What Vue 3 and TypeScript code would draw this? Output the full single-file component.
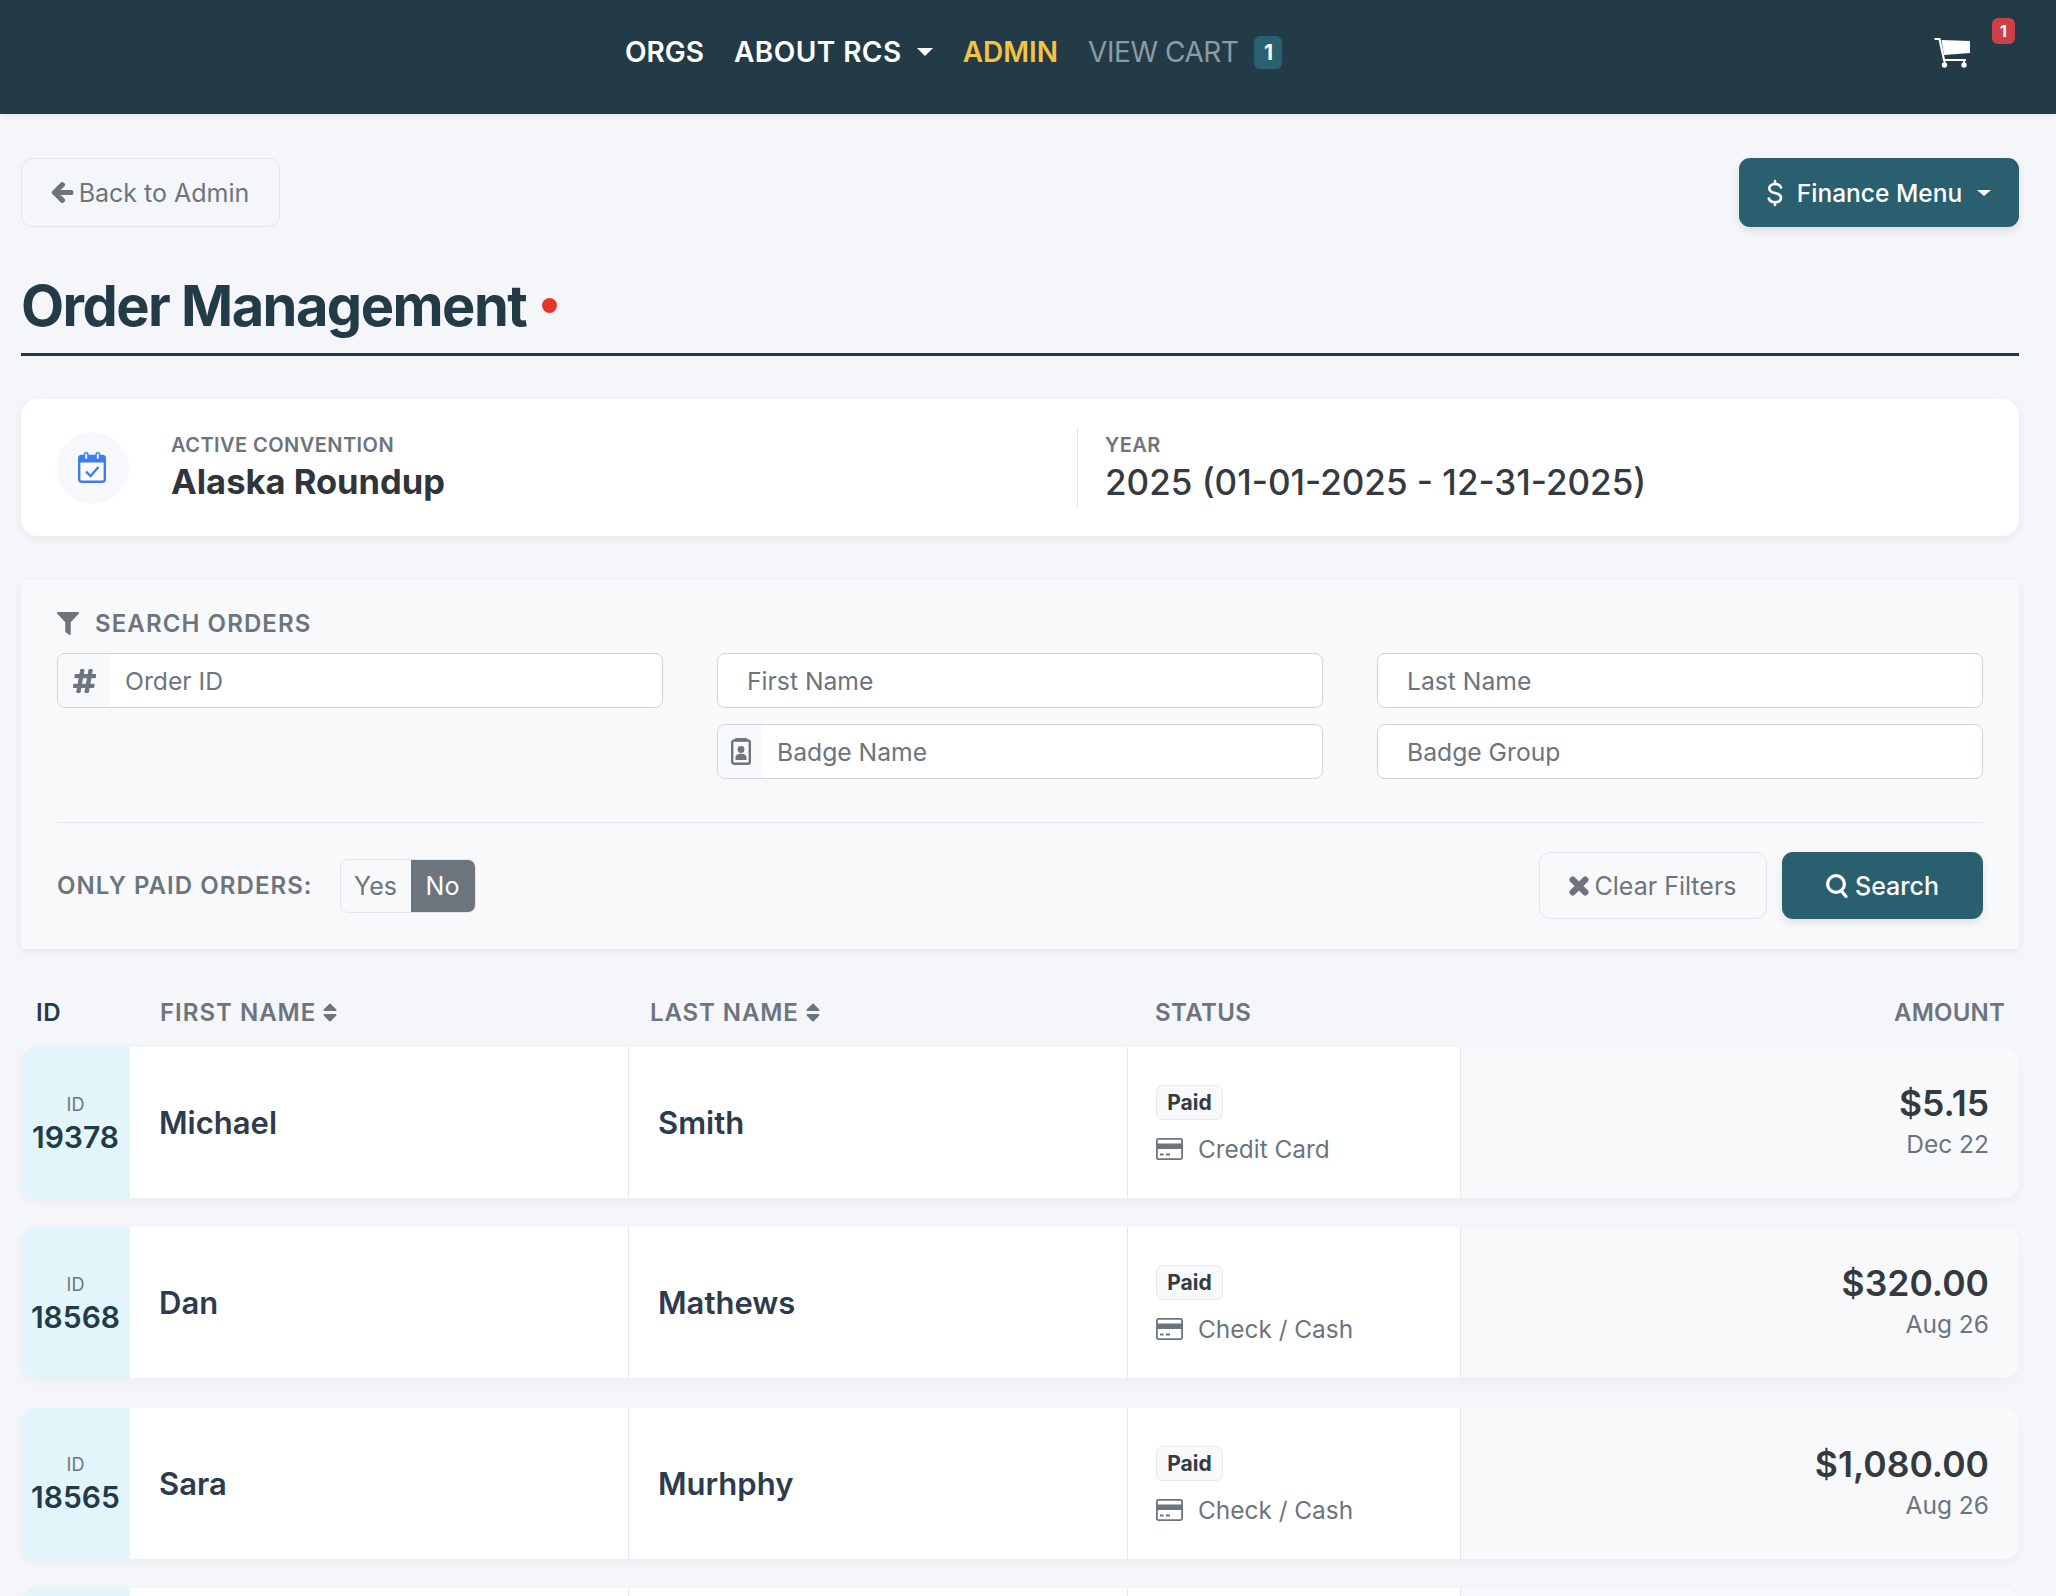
<script setup lang="ts">
interface Order {
  id: number
  first: string
  last: string
  method: string
  amount: string
  date: string
}

const orders: Order[] = [
  { id: 19378, first: 'Michael', last: 'Smith', method: 'Credit Card', amount: '$5.15', date: 'Dec 22' },
  { id: 18568, first: 'Dan', last: 'Mathews', method: 'Check / Cash', amount: '$320.00', date: 'Aug 26' },
  { id: 18565, first: 'Sara', last: 'Murhphy', method: 'Check / Cash', amount: '$1,080.00', date: 'Aug 26' }
]

const sortPath =
  'M41 288h238c21.4 0 32.1 25.9 17 41L177 448c-9.4 9.4-24.6 9.4-33.9 0L24 329c-15.1-15.1-4.4-41 17-41zm255-105L177 64c-9.4-9.4-24.6-9.4-33.9 0L24 183c-15.1 15.1-4.4 41 17 41h238c21.4 0 32.1-25.9 17-41z'
</script>

<template>
  <div class="page">
    <nav class="topbar">
      <div class="links">
        <a class="link">ORGS</a>
        <a class="link about">ABOUT RCS<span class="caret"></span></a>
        <a class="link admin">ADMIN</a>
        <a class="link muted">VIEW CART<span class="count">1</span></a>
      </div>
      <div class="cart">
        <svg class="cart-icon" viewBox="9 27 37 32" fill="#fff">
          <path d="M9.5 29H14.5L19 50H41" fill="none" stroke="#fff" stroke-width="2.2" />
          <path d="M16.5 30L45 31V43L19 45Z" />
          <path d="M19.5 50V55M39 50V55" stroke="#fff" stroke-width="1.8" />
          <circle cx="19.5" cy="55" r="2.7" />
          <circle cx="39" cy="55" r="2.7" />
        </svg>
        <span class="cart-badge">1</span>
      </div>
    </nav>

    <main class="content">
      <div class="toolbar">
        <button class="btn btn-light">
          <svg class="ico" viewBox="0 0 448 512" fill="currentColor" stroke="currentColor" stroke-width="36">
            <path d="M257.5 445.1l-22.2 22.2c-9.4 9.4-24.6 9.4-33.9 0L7 273c-9.4-9.4-9.4-24.6 0-33.9L201.4 44.7c9.4-9.4 24.6-9.4 33.9 0l22.2 22.2c9.5 9.5 9.3 25-.4 34.3L136.6 216H424c13.3 0 24 10.7 24 24v32c0 13.3-10.7 24-24 24H136.6l120.5 114.8c9.8 9.3 10 24.8.4 34.3z" />
          </svg>
          Back to Admin
        </button>
        <button class="btn btn-primary finance">
          <svg class="dollar" viewBox="0 0 16 28" fill="none" stroke="currentColor" stroke-width="2.6" stroke-linecap="round">
            <path d="M14 8.5C13 6 11 5 8 5C4.5 5 2.3 6.8 2.3 9.4C2.3 12.2 4.6 13.2 8 14C11.6 14.9 14 15.9 14 18.8C14 21.6 11.5 23.2 8 23.2C4.7 23.2 2.6 21.9 1.8 19.5" />
            <path d="M8 2V5M8 23.2V26" />
          </svg>
          Finance Menu<span class="caret"></span>
        </button>
      </div>

      <h1 class="title">Order Management<span class="dot"></span></h1>

      <section class="convention">
        <div class="convention-main">
          <div class="cal-circle">
            <svg class="cal" viewBox="0 0 28 31" fill="none">
              <rect x="1.2" y="4" width="25.6" height="25.8" rx="2.5" fill="#fff" stroke="#3b7df5" stroke-width="2.4" />
              <path d="M1.2 6.5A2.5 2.5 0 0 1 3.7 4H24.3A2.5 2.5 0 0 1 26.8 6.5V10.5H1.2Z" fill="#3b7df5" />
              <path d="M8 19.5L12.5 24L20.5 15" stroke="#3b7df5" stroke-width="2.4" />
              <rect x="6.5" y=".8" width="3.4" height="7" rx="1.7" fill="#fff" stroke="#3b7df5" stroke-width="1.5" />
              <rect x="18.1" y=".8" width="3.4" height="7" rx="1.7" fill="#fff" stroke="#3b7df5" stroke-width="1.5" />
            </svg>
          </div>
          <div class="convention-text">
            <div class="label">ACTIVE CONVENTION</div>
            <div class="convention-name">Alaska Roundup</div>
          </div>
        </div>
        <div class="convention-year">
          <div class="label">YEAR</div>
          <div class="year-value">2025 (01-01-2025 - 12-31-2025)</div>
        </div>
      </section>

      <section class="filters">
        <h2 class="filters-title">
          <svg class="funnel" viewBox="0 0 512 512" fill="currentColor" preserveAspectRatio="none">
            <path d="M487.976 0H24.028C2.71 0-8.047 25.866 7.058 40.971L192 225.941V432c0 7.831 3.821 15.17 10.237 19.662l80 55.98C298.02 518.69 320 507.493 320 487.98V225.941l184.947-184.97C520.021 25.896 509.338 0 487.976 0z" />
          </svg>
          SEARCH ORDERS
        </h2>
        <div class="fields">
          <div class="input-group">
            <span class="addon hash">
              <svg viewBox="0 0 448 512" fill="currentColor" stroke="currentColor" stroke-width="22">
                <path d="M440.667 182.109l7.143-40c1.313-7.355-4.342-14.109-11.813-14.109h-74.81l14.623-81.891C377.123 38.754 371.468 32 363.997 32h-40.632a12 12 0 0 0-11.813 9.891L296.175 128H197.54l14.623-81.891C213.477 38.754 207.822 32 200.35 32h-40.632a12 12 0 0 0-11.813 9.891L132.528 128H53.432a12 12 0 0 0-11.813 9.891l-7.143 40C33.163 185.246 38.818 192 46.289 192h74.81L98.242 320H19.146a12 12 0 0 0-11.813 9.891l-7.143 40C-1.123 377.246 4.532 384 12.003 384h74.81L72.19 465.891C70.877 473.246 76.532 480 84.003 480h40.632a12 12 0 0 0 11.813-9.891L151.825 384h98.634l-14.623 81.891C234.523 473.246 240.178 480 247.65 480h40.632a12 12 0 0 0 11.813-9.891L315.472 384h79.096a12 12 0 0 0 11.813-9.891l7.143-40c1.313-7.355-4.342-14.109-11.813-14.109h-74.81l22.857-128h79.096a12 12 0 0 0 11.813-9.891zM261.889 320h-98.634l22.857-128h98.634l-22.857 128z" />
              </svg>
            </span>
            <input class="field with-addon-hash" placeholder="Order ID" />
          </div>
          <div class="input-group"><input class="field" placeholder="First Name" /></div>
          <div class="input-group"><input class="field" placeholder="Last Name" /></div>
          <div></div>
          <div class="input-group">
            <span class="addon badge-addon">
              <svg viewBox="0 0 20 27" fill="none">
                <rect x="1.2" y="2.5" width="17.6" height="23.3" rx="2" stroke="#6c757d" stroke-width="2.4" />
                <rect x="4" y="0" width="12" height="3.5" rx="1" fill="#6c757d" />
                <circle cx="10" cy="11.5" r="3.4" fill="#6c757d" />
                <path d="M4.5 22V19.8C4.5 17.2 6.8 15.8 10 15.8S15.5 17.2 15.5 19.8V22Z" fill="#6c757d" />
              </svg>
            </span>
            <input class="field with-addon-badge" placeholder="Badge Name" />
          </div>
          <div class="input-group"><input class="field" placeholder="Badge Group" /></div>
        </div>
        <div class="filters-foot">
          <div class="paid-toggle">
            <span class="paid-label">ONLY PAID ORDERS:</span>
            <div class="toggle">
              <span class="opt">Yes</span>
              <span class="opt on">No</span>
            </div>
          </div>
          <div class="actions">
            <button class="btn btn-light clear">
              <svg class="ico-x" viewBox="0 0 352 512" fill="currentColor" stroke="currentColor" stroke-width="30">
                <path d="M242.72 256l100.07-100.07c12.28-12.28 12.28-32.19 0-44.48l-22.24-22.24c-12.28-12.28-32.19-12.28-44.48 0L176 189.28 75.93 89.21c-12.28-12.28-32.19-12.28-44.48 0L9.21 111.45c-12.28 12.28-12.28 32.19 0 44.48L109.28 256 9.21 356.07c-12.28 12.28-12.28 32.19 0 44.48l22.24 22.24c12.28 12.28 32.2 12.28 44.48 0L176 322.72l100.07 100.07c12.28 12.28 32.2 12.28 44.48 0l22.24-22.24c12.28-12.28 12.28-32.19 0-44.48L242.72 256z" />
              </svg>
              Clear Filters
            </button>
            <button class="btn btn-primary search">
              <svg class="ico-search" viewBox="0 0 22 24" fill="none" stroke="currentColor" stroke-width="3.2">
                <circle cx="10" cy="10" r="8.4" />
                <path d="M15 16.5L20 22.5" stroke-linecap="round" />
              </svg>
              Search
            </button>
          </div>
        </div>
      </section>

      <div class="table-head grid">
        <div class="th th-id">ID</div>
        <div class="th th-first">FIRST NAME<svg class="sort" viewBox="0 0 320 512" fill="currentColor"><path :d="sortPath" /></svg></div>
        <div class="th th-last">LAST NAME<svg class="sort" viewBox="0 0 320 512" fill="currentColor"><path :d="sortPath" /></svg></div>
        <div class="th th-status">STATUS</div>
        <div class="th th-amount">AMOUNT</div>
      </div>

      <div class="rows">
        <div v-for="o in orders" :key="o.id" class="row grid">
          <div class="cell id-cell">
            <span class="id-label">ID</span>
            <span class="id-value">{{ o.id }}</span>
          </div>
          <div class="cell name first-name">{{ o.first }}</div>
          <div class="cell name last-name">{{ o.last }}</div>
          <div class="cell status">
            <span class="paid">Paid</span>
            <span class="method">
              <svg class="card-icon" viewBox="0 0 27 22" fill="none">
                <rect x=".9" y=".9" width="25.2" height="20.2" rx="1.5" stroke="#6c757d" stroke-width="1.8" />
                <rect x="1" y="5.5" width="25" height="5.5" fill="#6c757d" />
                <path d="M4 16.5H7.5M10 16.5H14" stroke="#6c757d" stroke-width="1.8" />
              </svg>
              {{ o.method }}
            </span>
          </div>
          <div class="cell amount">
            <span class="amount-value">{{ o.amount }}</span>
            <span class="amount-date">{{ o.date }}</span>
          </div>
        </div>
        <div class="row grid">
          <div class="cell id-cell"></div>
          <div class="cell name first-name"></div>
          <div class="cell name last-name"></div>
          <div class="cell status"></div>
          <div class="cell amount"></div>
        </div>
      </div>
    </main>
  </div>
</template>

<style scoped>
.page {
  height: 1596px;
  overflow: hidden;
  background: #f4f6fa;
  font-family: Inter, "Liberation Sans", sans-serif;
  color: #343a40;
}

.topbar {
  height: 114px;
  background: #233b47;
  display: flex;
  justify-content: space-between;
  padding: 31px 41px 0 625px;
  box-sizing: border-box;
  box-shadow: 0 2px 8px rgba(0, 0, 0, 0.08);
  position: relative;
}

.links {
  display: flex;
  align-items: center;
  gap: 30px;
  height: 42px;
}

.link {
  font-size: 28px;
  font-weight: 600;
  color: #fff;
  display: flex;
  align-items: center;
  white-space: nowrap;
}

.link.about {
  letter-spacing: 0.45px;
}

.link.admin {
  color: #f6c244;
}

.link.muted {
  color: #8c9ca4;
  font-weight: 400;
  letter-spacing: -0.45px;
}

.caret {
  display: inline-block;
  margin-left: 15px;
  border-top: 8px solid currentColor;
  border-left: 8px solid transparent;
  border-right: 8px solid transparent;
}

.count {
  margin-left: 16px;
  width: 28px;
  height: 33px;
  border-radius: 6px;
  background: #2a6070;
  color: #fff;
  font-size: 21px;
  font-weight: 700;
  letter-spacing: 0;
  display: flex;
  align-items: center;
  justify-content: center;
}

.cart {
  position: relative;
  width: 81px;
  height: 40px;
}

.cart-icon {
  position: absolute;
  left: 0;
  top: 6px;
  width: 37px;
  height: 32px;
}

.cart-badge {
  position: absolute;
  left: 58px;
  top: -13px;
  width: 23px;
  height: 26px;
  border-radius: 6px;
  background: #cc4148;
  color: #fff;
  font-size: 16px;
  font-weight: 700;
  display: flex;
  align-items: center;
  justify-content: center;
}

.content {
  padding: 44px 37px 0 21px;
}

.toolbar {
  display: flex;
  justify-content: space-between;
}

.btn {
  font-family: inherit;
  font-size: 25px;
  border-radius: 11px;
  display: inline-flex;
  align-items: center;
  justify-content: center;
  box-sizing: border-box;
  cursor: pointer;
  white-space: nowrap;
}

.btn-light {
  background: transparent;
  border: 1.5px solid #e2e5e9;
  color: #6c757d;
}

.btn-primary {
  background: #2a5f70;
  border: 0;
  color: #fff;
  font-weight: 500;
  box-shadow: 0 4px 8px rgba(0, 0, 0, 0.1);
}

.toolbar .btn {
  height: 69px;
}

.toolbar .btn-light {
  width: 259px;
  gap: 6px;
}

.ico {
  width: 21px;
  height: 23px;
  overflow: visible;
}

.finance {
  width: 280px;
  gap: 14px;
  font-size: 24.5px;
}

.dollar {
  width: 16px;
  height: 28px;
}

.finance .caret {
  margin-left: 1px;
  border-top-width: 6.5px;
  border-left-width: 7px;
  border-right-width: 7px;
}

.title {
  margin: 45px 0 0;
  padding-bottom: 13px;
  border-bottom: 3px solid #1f3a47;
  font-size: 56px;
  line-height: 68px;
  font-weight: 700;
  letter-spacing: -1.55px;
  color: #233b47;
  display: flex;
  align-items: center;
}

.dot {
  width: 15px;
  height: 15px;
  border-radius: 50%;
  background: #e8352b;
  margin: 0 0 2px 16px;
}

.convention {
  margin-top: 43px;
  height: 137px;
  box-sizing: border-box;
  background: #fff;
  border-radius: 17px;
  box-shadow: 0 3px 12px rgba(0, 0, 0, 0.06);
  display: flex;
  align-items: center;
  padding-left: 36px;
}

.convention-main {
  width: 1020px;
  display: flex;
  align-items: center;
  gap: 42px;
}

.convention-text {
  padding-top: 2px;
}

.cal-circle {
  width: 72px;
  height: 72px;
  border-radius: 50%;
  background: #f6f8fb;
  display: flex;
  align-items: center;
  justify-content: center;
}

.cal {
  width: 28px;
  height: 31px;
  margin-left: -2px;
}

.label {
  font-size: 20px;
  font-weight: 600;
  color: #6c757d;
  letter-spacing: 0.45px;
  line-height: 26px;
}

.convention-name {
  font-size: 34.5px;
  font-weight: 700;
  line-height: 48px;
  color: #2f353b;
}

.convention-year {
  height: 81px;
  border-left: 1px solid #e6e8eb;
  padding-left: 27px;
  padding-top: 2px;
  box-sizing: border-box;
  display: flex;
  flex-direction: column;
  justify-content: center;
}

.year-value {
  font-size: 35px;
  font-weight: 500;
  line-height: 48px;
  color: #343a40;
}

.filters {
  margin-top: 44px;
  height: 369px;
  box-sizing: border-box;
  background: #f8f9fb;
  border-radius: 5px;
  box-shadow: 0 3px 10px rgba(0, 0, 0, 0.06);
  padding: 32px 36px 0;
}

.filters-title {
  margin: 0;
  height: 41px;
  display: flex;
  align-items: flex-start;
  gap: 16px;
  font-size: 24px;
  font-weight: 600;
  line-height: 24px;
  letter-spacing: 1.1px;
  color: #6c757d;
}

.funnel {
  width: 22px;
  height: 23px;
}

.fields {
  display: grid;
  grid-template-columns: repeat(3, 606px);
  justify-content: space-between;
  row-gap: 16px;
}

.input-group {
  height: 55px;
  display: flex;
  box-sizing: border-box;
  background: #fff;
  border: 1.5px solid #ced4da;
  border-radius: 8px;
  overflow: hidden;
}

.addon {
  background: #f8f9fa;
  display: flex;
  align-items: center;
  justify-content: center;
  color: #6c757d;
  flex: none;
}

.addon.hash {
  width: 52px;
}

.addon.hash svg {
  width: 23px;
  height: 26px;
}

.addon.badge-addon {
  width: 45px;
}

.addon.badge-addon svg {
  width: 20px;
  height: 27px;
}

.field {
  flex: 1;
  min-width: 0;
  border: 0;
  outline: 0;
  background: transparent;
  padding: 0 29px;
  font-family: inherit;
  font-size: 24.7px;
  color: #343a40;
}

.field::placeholder {
  color: #6c757d;
  opacity: 1;
}

.field.with-addon-hash {
  padding-left: 15px;
}

.field.with-addon-badge {
  padding-left: 14px;
}

.filters-foot {
  margin-top: 43px;
  padding-top: 29px;
  border-top: 1.5px solid #e2e5e9;
  display: flex;
  justify-content: space-between;
  align-items: center;
}

.paid-toggle {
  display: flex;
  align-items: center;
  gap: 27px;
}

.paid-label {
  font-size: 24px;
  font-weight: 600;
  letter-spacing: 1.05px;
  color: #6c757d;
}

.toggle {
  display: flex;
  height: 54px;
  border: 1.5px solid #e2e5e9;
  border-radius: 8px;
  overflow: hidden;
  box-sizing: border-box;
}

.opt {
  display: flex;
  align-items: center;
  justify-content: center;
  width: 70px;
  font-size: 25px;
  color: #6c757d;
}

.opt.on {
  width: 64px;
  background: #6c757d;
  color: #fff;
}

.actions {
  display: flex;
  gap: 15px;
}

.actions .btn {
  height: 67px;
}

.clear {
  width: 228px;
  gap: 7px;
}

.ico-x {
  width: 18px;
  height: 26px;
  overflow: visible;
}

.search {
  width: 201px;
  gap: 7px;
}

.ico-search {
  width: 22px;
  height: 24px;
}

.grid {
  display: grid;
  grid-template-columns: 109px 499px 499px 333px 1fr;
}

.table-head {
  margin-top: 46px;
  margin-bottom: 18px;
  height: 34px;
  align-items: center;
}

.th {
  font-size: 24px;
  font-weight: 600;
  letter-spacing: 0.5px;
  color: #6c757d;
  display: flex;
  align-items: center;
  gap: 6px;
}

.th-id {
  padding-left: 15px;
  color: #233b47;
}

.th-first {
  padding-left: 30px;
  letter-spacing: 1px;
}

.th-last {
  padding-left: 21px;
  letter-spacing: 0.9px;
}

.th-status {
  padding-left: 27px;
  letter-spacing: 0.4px;
}

.th-amount {
  justify-content: flex-end;
  padding-right: 14px;
  letter-spacing: 0.2px;
}

.sort {
  width: 16px;
  height: 23px;
}

.rows {
  display: flex;
  flex-direction: column;
  gap: 29.4px;
}

.row {
  height: 151px;
  border-radius: 15px;
  box-shadow: 0 4px 12px rgba(0, 0, 0, 0.04);
  flex: none;
}

.cell {
  background: #fff;
  box-sizing: border-box;
  display: flex;
}

.id-cell {
  background: #e2f5fa;
  border-radius: 15px 0 0 15px;
  flex-direction: column;
  align-items: center;
  justify-content: center;
  padding-top: 4px;
}

.id-label {
  font-size: 18px;
  line-height: 24px;
  color: #6c757d;
}

.id-value {
  font-size: 30px;
  font-weight: 600;
  line-height: 40px;
  color: #233b47;
}

.name {
  align-items: center;
  font-size: 31px;
  font-weight: 600;
  color: #2d3b4e;
  border-right: 1px solid #e6e8eb;
}

.first-name {
  padding-left: 29px;
}

.last-name {
  padding-left: 29px;
}

.status {
  flex-direction: column;
  align-items: flex-start;
  padding: 38px 0 0 28px;
  border-right: 1px solid #e6e8eb;
}

.paid {
  width: 67px;
  height: 35px;
  box-sizing: border-box;
  border: 1.5px solid #e6e8eb;
  border-radius: 7px;
  background: #f8f9fa;
  font-size: 21px;
  font-weight: 700;
  color: #343a40;
  display: flex;
  align-items: center;
  justify-content: center;
}

.method {
  margin-top: 14px;
  display: flex;
  align-items: center;
  gap: 15px;
  font-size: 24.4px;
  line-height: 30px;
  color: #6c757d;
}

.card-icon {
  width: 27px;
  height: 22px;
}

.amount {
  background: #f8f9fb;
  border-radius: 0 15px 15px 0;
  flex-direction: column;
  align-items: flex-end;
  padding: 35px 30px 0 0;
}

.amount-value {
  font-size: 35.5px;
  font-weight: 600;
  line-height: 44px;
  color: #343a40;
}

.amount-date {
  font-size: 24.5px;
  line-height: 36px;
  color: #6c757d;
}
</style>
